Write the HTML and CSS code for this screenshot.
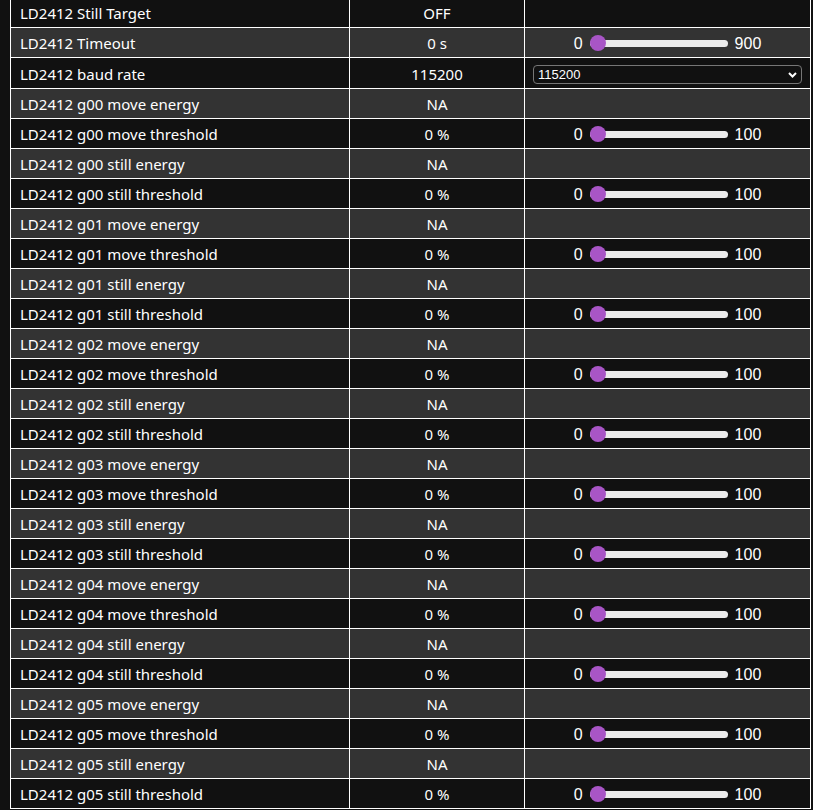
FILE: index.html
```html
<!DOCTYPE html>
<html lang="en">
<head>
    <meta charset="UTF-8">
    <meta name="viewport" content="width=device-width, initial-scale=1.0">
    <title>LD2412</title>
    <link rel="stylesheet" href="styles.css">
</head>
<body>
    <table class="states">
        <colgroup>
            <col class="c-name">
            <col class="c-state">
            <col class="c-ctrl">
        </colgroup>
        <tbody id="rows">
            <tr><td>LD2412 Still Target</td><td class="state">OFF</td><td></td></tr>
            <tr>
                <td>LD2412 Timeout</td><td class="state">0 s</td>
                <td class="ctrl"><div class="range"><label>0</label><input type="range" min="0" max="900" value="0"><label>900</label></div></td>
            </tr>
            <tr>
                <td>LD2412 baud rate</td><td class="state">115200</td>
                <td class="ctrl sel">
                    <div class="select-wrap">
                        <select>
                            <option>115200</option>
                            <option>256000</option>
                        </select>
                        <svg class="chev" width="9" height="6" viewBox="0 0 9 6"><polyline points="1,1 4.5,4.5 8,1" fill="none" stroke="#fff" stroke-width="2"/></svg>
                    </div>
                </td>
            </tr>
        </tbody>
    </table>

    <script>
        var rows = document.getElementById('rows');
        var html = '';
        for (var g = 0; g < 6; g++) {
            var n = 'g0' + g;
            html += '<tr><td>LD2412 ' + n + ' move energy</td><td class="state">NA</td><td></td></tr>';
            html += '<tr><td>LD2412 ' + n + ' move threshold</td><td class="state">0 %</td>' +
                '<td class="ctrl"><div class="range"><label>0</label><input type="range" min="0" max="100" value="0"><label>100</label></div></td></tr>';
            html += '<tr><td>LD2412 ' + n + ' still energy</td><td class="state">NA</td><td></td></tr>';
            html += '<tr><td>LD2412 ' + n + ' still threshold</td><td class="state">0 %</td>' +
                '<td class="ctrl"><div class="range"><label>0</label><input type="range" min="0" max="100" value="0"><label>100</label></div></td></tr>';
        }
        rows.innerHTML += html;
    </script>
</body>
</html>
```

FILE: styles.css
```css
body {
    margin: 0;
    padding: 0 0 0 10px;
    background: #111;
    color: #fff;
    font-family: "Noto Sans", "Open Sans", sans-serif;
    font-size: 15px;
}

.states {
    border-collapse: collapse;
    table-layout: fixed;
    width: 800px;
    margin-top: -3px;
}
.c-name { width: 339px; }
.c-state { width: 175px; }
.c-ctrl { width: 286px; }

td {
    border: 1px solid #fff;
    padding: 2px 9px 0;
    line-height: 27px;
    white-space: nowrap;
    background: #111;
}
tr:nth-child(even) td {
    background: #333;
}
td.state {
    text-align: center;
}
td.ctrl {
    padding: 0;
}

.range {
    display: flex;
    align-items: center;
    justify-content: center;
    gap: 7px;
    height: 28px;
    padding-top: 1px;
    font-family: "Liberation Sans", Arial, sans-serif;
    font-size: 16px;
}
.range input {
    -webkit-appearance: none;
    appearance: none;
    width: 138px;
    height: 20px;
    margin: 0;
    background: transparent;
}
.range input::-webkit-slider-runnable-track {
    height: 7px;
    border-radius: 4px;
    background: #ebebeb;
}
.range input::-webkit-slider-thumb {
    -webkit-appearance: none;
    width: 16px;
    height: 16px;
    margin-top: -4.5px;
    border-radius: 50%;
    border: none;
    background: #a855c6;
}

td.sel {
    padding: 0 8px;
    line-height: normal;
}
.select-wrap {
    position: relative;
    margin: 7px 0 4px;
}
.select-wrap select {
    -webkit-appearance: none;
    appearance: none;
    display: block;
    width: 100%;
    height: 19px;
    padding: 0 4px;
    border: 1px solid #767676;
    border-radius: 4px;
    background: #111;
    color: #fff;
    font-family: "Liberation Sans", Arial, sans-serif;
    font-size: 13px;
}
.chev {
    position: absolute;
    right: 5px;
    top: 7px;
    pointer-events: none;
}
```
